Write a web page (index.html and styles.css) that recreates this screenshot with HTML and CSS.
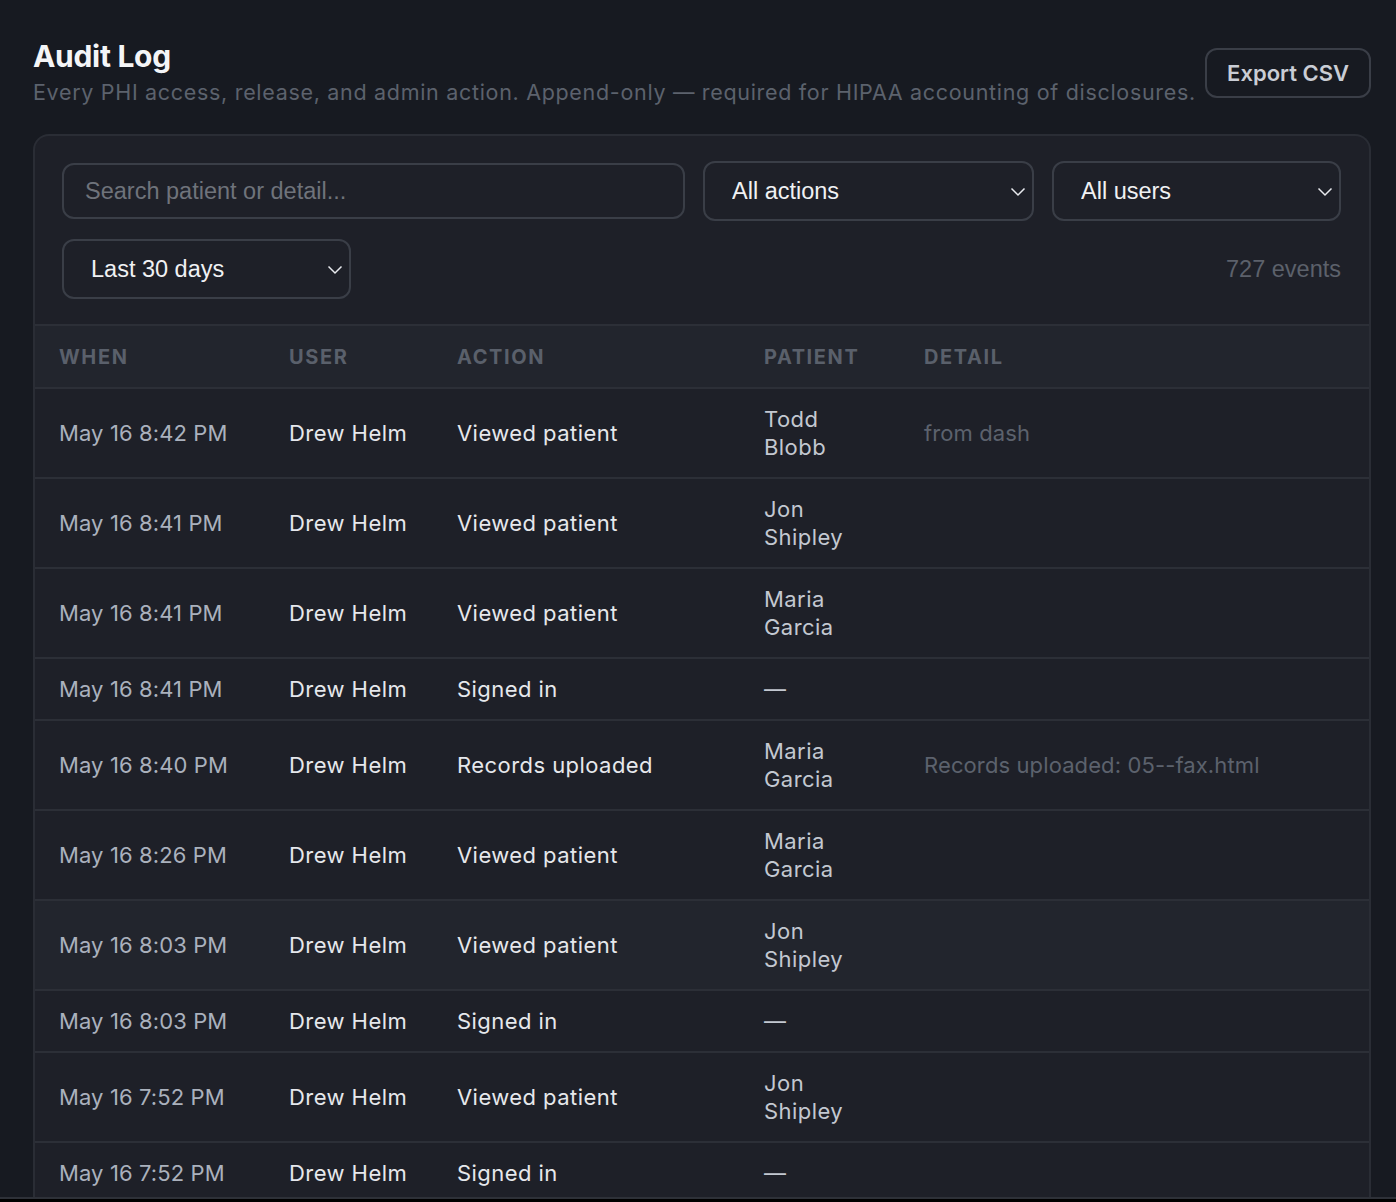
FILE: index.html
```html
<!doctype html>
<html lang="en">
<head>
    <meta charset="UTF-8">
    <title>Audit Log</title>
    <link rel="stylesheet" href="styles.css">
</head>
<body>
<div class="page">
    <div class="head">
        <div class="head-text">
            <h1>Audit Log</h1>
            <p class="sub">Every PHI access, release, and admin action. Append-only — required for HIPAA accounting of disclosures.</p>
        </div>
        <button class="btn">Export CSV</button>
    </div>

    <div class="card">
        <div class="filters">
            <input class="search" type="text" placeholder="Search patient or detail...">
            <div class="select sel-actions">
                <select>
                    <option>All actions</option>
                    <option>Viewed patient</option>
                    <option>Signed in</option>
                </select>
                <svg class="chev" width="16" height="10" viewBox="0 0 16 10"><path d="M1.5 1.5 L8 8 L14.5 1.5" fill="none" stroke="#e8eaee" stroke-width="1.5"/></svg>
            </div>
            <div class="select sel-users">
                <select>
                    <option>All users</option>
                    <option>Drew Helm</option>
                </select>
                <svg class="chev" width="16" height="10" viewBox="0 0 16 10"><path d="M1.5 1.5 L8 8 L14.5 1.5" fill="none" stroke="#e8eaee" stroke-width="1.5"/></svg>
            </div>
            <div class="select sel-range">
                <select>
                    <option>Last 30 days</option>
                    <option>Last 7 days</option>
                </select>
                <svg class="chev" width="16" height="10" viewBox="0 0 16 10"><path d="M1.5 1.5 L8 8 L14.5 1.5" fill="none" stroke="#e8eaee" stroke-width="1.5"/></svg>
            </div>
            <div class="count">727 events</div>
        </div>

        <table class="log">
            <colgroup>
                <col style="width:230px">
                <col style="width:168px">
                <col style="width:307px">
                <col style="width:160px">
                <col>
            </colgroup>
            <thead>
                <tr><th>When</th><th>User</th><th>Action</th><th>Patient</th><th>Detail</th></tr>
            </thead>
            <tbody>
                <tr><td class="when">May 16 8:42 PM</td><td>Drew Helm</td><td>Viewed patient</td><td class="pt">Todd Blobb</td><td class="detail">from dash</td></tr>
                <tr><td class="when">May 16 8:41 PM</td><td>Drew Helm</td><td>Viewed patient</td><td class="pt">Jon Shipley</td><td class="detail"></td></tr>
                <tr><td class="when">May 16 8:41 PM</td><td>Drew Helm</td><td>Viewed patient</td><td class="pt">Maria Garcia</td><td class="detail"></td></tr>
                <tr><td class="when">May 16 8:41 PM</td><td>Drew Helm</td><td>Signed in</td><td class="pt">—</td><td class="detail"></td></tr>
                <tr><td class="when">May 16 8:40 PM</td><td>Drew Helm</td><td>Records uploaded</td><td class="pt">Maria Garcia</td><td class="detail">Records uploaded: 05--fax.html</td></tr>
                <tr><td class="when">May 16 8:26 PM</td><td>Drew Helm</td><td>Viewed patient</td><td class="pt">Maria Garcia</td><td class="detail"></td></tr>
                <tr class="hover"><td class="when">May 16 8:03 PM</td><td>Drew Helm</td><td>Viewed patient</td><td class="pt">Jon Shipley</td><td class="detail"></td></tr>
                <tr><td class="when">May 16 8:03 PM</td><td>Drew Helm</td><td>Signed in</td><td class="pt">—</td><td class="detail"></td></tr>
                <tr><td class="when">May 16 7:52 PM</td><td>Drew Helm</td><td>Viewed patient</td><td class="pt">Jon Shipley</td><td class="detail"></td></tr>
                <tr><td class="when">May 16 7:52 PM</td><td>Drew Helm</td><td>Signed in</td><td class="pt">—</td><td class="detail"></td></tr>
            </tbody>
        </table>
    </div>
</div>
</body>
</html>
```

FILE: styles.css
```css
html,body{
    margin:0px;
    padding:0px;
    background:#000;
}
body{
    font-family:Inter,"Noto Sans",sans-serif;
    color:#e6e8ec;
}
.page{
    height:1197px;
    overflow:hidden;
    background:#171a21;
    border-bottom:2px solid #2e3138;
    padding:0 25px 0 33px;
}
.head{
    display:flex;
    align-items:center;
    justify-content:space-between;
    padding-top:39px;
}
.head h1{
    margin:0px;
    font-size:30px;
    font-weight:700;
    letter-spacing:-0.01em;
    line-height:34px;
    color:#f4f5f7;
}
.head .sub{
    margin:2px 0 0 0;
    font-size:21.5px;
    letter-spacing:0.032em;
    line-height:34px;
    color:#5c626d;
}
.btn{
    font-family:Inter,sans-serif;
    font-size:22px;
    font-weight:600;
    color:#c9cdd5;
    background:transparent;
    border:2px solid #3a3e47;
    border-radius:12px;
    height:50px;
    padding:0 20px;
    margin-top:-2px;
}
.card{
    margin-top:25px;
    background:#1e2028;
    border:2px solid #2a2d35;
    border-bottom:none;
    border-radius:16px 16px 0 0;
}
.filters{
    display:flex;
    flex-wrap:wrap;
    align-items:center;
    gap:18px;
    padding:25px 28px 25px 27px;
    border-bottom:2px solid #2c2f37;
}
.search{
    flex:1 0 560px;
    height:56px;
    box-sizing:border-box;
    background:transparent;
    border:2px solid #3a3e47;
    border-radius:12px;
    padding:0 21px;
    font-family:"Liberation Sans",Arial,sans-serif;
    font-size:23.5px;
    color:#e8eaee;
    outline:none;
}
.search::placeholder{
    color:#6f737b;
}
.select{
    position:relative;
    height:60px;
}
.select select{
    appearance:none;
    -webkit-appearance:none;
    width:100%;
    height:60px;
    box-sizing:border-box;
    background:transparent;
    border:2px solid #3a3e47;
    border-radius:12px;
    padding:0 40px 0 27px;
    font-family:"Liberation Sans",Arial,sans-serif;
    font-size:23.5px;
    color:#f0f1f3;
}
.select .chev{
    position:absolute;
    right:8px;
    top:26px;
    pointer-events:none;
}
.sel-actions{ width:331px; }
.sel-users{ width:289px; }
.sel-range{ width:289px; }
.count{
    margin-left:auto;
    font-family:"Liberation Sans",Arial,sans-serif;
    font-size:23.5px;
    color:#5c616b;
}
.log{
    width:100%;
    border-collapse:collapse;
    table-layout:fixed;
}
.log th{
    background:#22252d;
    height:61px;
    padding:0 24px;
    text-align:left;
    font-size:20px;
    font-weight:700;
    letter-spacing:0.08em;
    text-transform:uppercase;
    color:#5a606b;
    border-bottom:2px solid #2c2f37;
}
.log td{
    padding:16px 24px;
    font-size:22px;
    letter-spacing:0.02em;
    line-height:28px;
    color:#e6e8ec;
    border-bottom:2px solid #2c2f37;
    vertical-align:middle;
}
.log td.when{
    color:#aab1bd;
    letter-spacing:0.005em;
}
.log td.pt{
    color:#c3c8d1;
    padding-right:45px;
}
.log td.detail{
    color:#5c626d;
    letter-spacing:0.005em;
}
.log tr.hover td{
    background:#22252d;
}
```
